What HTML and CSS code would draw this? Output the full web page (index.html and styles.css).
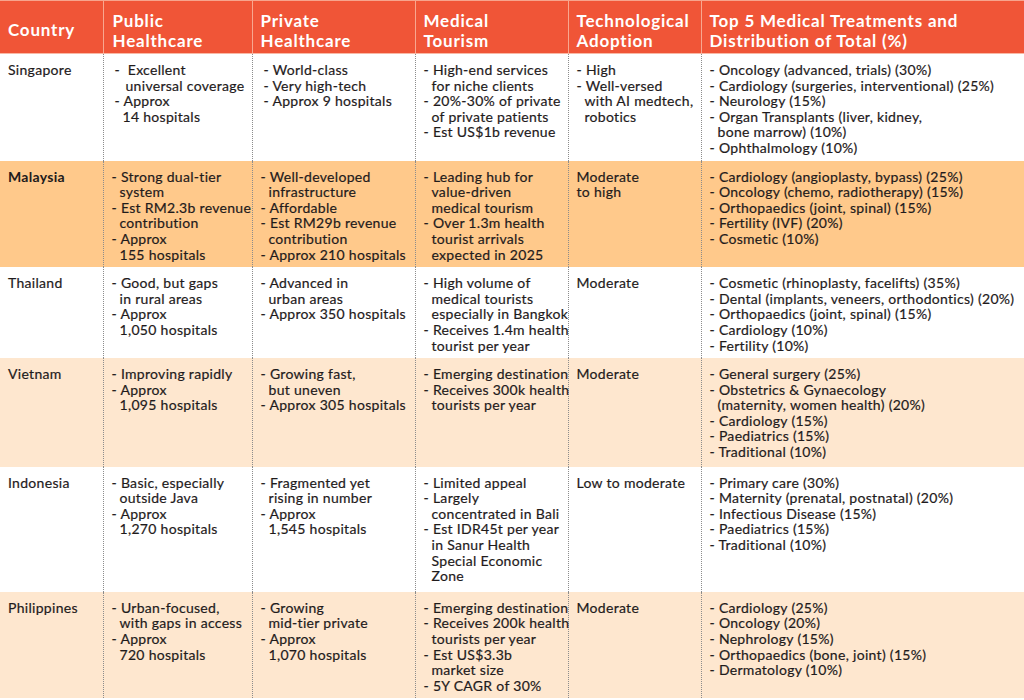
FILE: index.html
```html
<!DOCTYPE html>
<html>
<head>
<meta charset="utf-8">
<link rel="stylesheet" href="styles.css">
</head>
<body>
<table class="grid">
  <colgroup>
    <col class="c1"><col class="c2"><col class="c3"><col class="c4"><col class="c5"><col class="c6">
  </colgroup>
  <thead>
    <tr>
      <th class="h-country">Country</th>
      <th class="h-pad1">Public<br>Healthcare</th>
      <th>Private<br>Healthcare</th>
      <th>Medical<br>Tourism</th>
      <th>Technological<br>Adoption</th>
      <th>Top 5 Medical Treatments and<br>Distribution of Total (%)</th>
    </tr>
  </thead>
  <tbody>
    <tr>
      <td>Singapore</td>
      <td class="wide"><div class="item lead">-&nbsp; Excellent<br>universal coverage</div><div class="item">- Approx<br>14 hospitals</div></td>
      <td class="wide"><div class="item">- World-class</div><div class="item">- Very high-tech</div><div class="item">- Approx 9 hospitals</div></td>
      <td><div class="item">- High-end services<br>for niche clients</div><div class="item">- 20%-30% of private<br>of private patients</div><div class="item">- Est US$1b revenue</div></td>
      <td><div class="item">- High</div><div class="item">- Well-versed<br>with AI medtech,<br>robotics</div></td>
      <td><div class="item">- Oncology (advanced, trials) (30%)</div><div class="item">- Cardiology (surgeries, interventional) (25%)</div><div class="item">- Neurology (15%)</div><div class="item">- Organ Transplants (liver, kidney,<br>bone marrow) (10%)</div><div class="item">- Ophthalmology (10%)</div></td>
    </tr>
    <tr class="hl">
      <td class="strong">Malaysia</td>
      <td><div class="item">- Strong dual-tier<br>system</div><div class="item">- Est RM2.3b revenue<br>contribution</div><div class="item">- Approx<br>155 hospitals</div></td>
      <td><div class="item">- Well-developed<br>infrastructure</div><div class="item">- Affordable</div><div class="item">- Est RM29b revenue<br>contribution</div><div class="item">- Approx 210 hospitals</div></td>
      <td><div class="item">- Leading hub for<br>value-driven<br>medical tourism</div><div class="item">- Over 1.3m health<br>tourist arrivals<br>expected in 2025</div></td>
      <td>Moderate<br>to high</td>
      <td><div class="item">- Cardiology (angioplasty, bypass) (25%)</div><div class="item">- Oncology (chemo, radiotherapy) (15%)</div><div class="item">- Orthopaedics (joint, spinal) (15%)</div><div class="item">- Fertility (IVF) (20%)</div><div class="item">- Cosmetic (10%)</div></td>
    </tr>
    <tr>
      <td>Thailand</td>
      <td><div class="item">- Good, but gaps<br>in rural areas</div><div class="item">- Approx<br>1,050 hospitals</div></td>
      <td><div class="item">- Advanced in<br>urban areas</div><div class="item">- Approx 350 hospitals</div></td>
      <td><div class="item">- High volume of<br>medical tourists<br>especially in Bangkok</div><div class="item">- Receives 1.4m health<br>tourist per year</div></td>
      <td>Moderate</td>
      <td><div class="item">- Cosmetic (rhinoplasty, facelifts) (35%)</div><div class="item">- Dental (implants, veneers, orthodontics) (20%)</div><div class="item">- Orthopaedics (joint, spinal) (15%)</div><div class="item">- Cardiology (10%)</div><div class="item">- Fertility (10%)</div></td>
    </tr>
    <tr class="soft roomy">
      <td>Vietnam</td>
      <td><div class="item">- Improving rapidly</div><div class="item">- Approx<br>1,095 hospitals</div></td>
      <td><div class="item">- Growing fast,<br>but uneven</div><div class="item">- Approx 305 hospitals</div></td>
      <td><div class="item">- Emerging destination</div><div class="item">- Receives 300k health<br>tourists per year</div></td>
      <td>Moderate</td>
      <td><div class="item">- General surgery (25%)</div><div class="item">- Obstetrics &amp; Gynaecology<br>(maternity, women health) (20%)</div><div class="item">- Cardiology (15%)</div><div class="item">- Paediatrics (15%)</div><div class="item">- Traditional (10%)</div></td>
    </tr>
    <tr class="tall">
      <td>Indonesia</td>
      <td><div class="item">- Basic, especially<br>outside Java</div><div class="item">- Approx<br>1,270 hospitals</div></td>
      <td><div class="item">- Fragmented yet<br>rising in number</div><div class="item">- Approx<br>1,545 hospitals</div></td>
      <td><div class="item">- Limited appeal</div><div class="item">- Largely<br>concentrated in Bali</div><div class="item">- Est IDR45t per year<br>in Sanur Health<br>Special Economic<br>Zone</div></td>
      <td>Low to moderate</td>
      <td><div class="item">- Primary care (30%)</div><div class="item">- Maternity (prenatal, postnatal) (20%)</div><div class="item">- Infectious Disease (15%)</div><div class="item">- Paediatrics (15%)</div><div class="item">- Traditional (10%)</div></td>
    </tr>
    <tr class="soft">
      <td>Philippines</td>
      <td><div class="item">- Urban-focused,<br>with gaps in access</div><div class="item">- Approx<br>720 hospitals</div></td>
      <td><div class="item">- Growing<br>mid-tier private</div><div class="item">- Approx<br>1,070 hospitals</div></td>
      <td><div class="item">- Emerging destination</div><div class="item">- Receives 200k health<br>tourists per year</div><div class="item">- Est US$3.3b<br>market size</div><div class="item">- 5Y CAGR of 30%</div></td>
      <td>Moderate</td>
      <td><div class="item">- Cardiology (25%)</div><div class="item">- Oncology (20%)</div><div class="item">- Nephrology (15%)</div><div class="item">- Orthopaedics (bone, joint) (15%)</div><div class="item">- Dermatology (10%)</div></td>
    </tr>
  </tbody>
</table>
</body>
</html>
```

FILE: styles.css
```css
html, body {
  margin: 0;
  padding: 0;
  background: #ffffff;
}

body {
  font-family: Lato, "Liberation Sans", sans-serif;
  color: #1f1b1c;
  width: 1024px;
  height: 700px;
  overflow: hidden;
}

.grid {
  width: 1024px;
  table-layout: fixed;
  border-collapse: collapse;
  border-spacing: 0;
}

.c1 { width: 103px; }
.c2 { width: 149px; }
.c3 { width: 163px; }
.c4 { width: 153px; }
.c5 { width: 133px; }
.c6 { width: 323px; }

th {
  background: #f05537;
  color: #ffffff;
  font-weight: 700;
  font-size: 17px;
  letter-spacing: 0.8px;
  line-height: 20.4px;
  text-align: left;
  vertical-align: top;
  padding: 9.5px 4px 1.7px 8px;
  border-top: 1px solid #f7a48d;
  border-bottom: 1px solid #f9b9a6;
  border-left: 1px solid #f8a78f;
  white-space: nowrap;
}

th:first-child {
  border-left: none;
}

.h-country {
  padding-top: 18.5px;
  padding-bottom: 0;
}

.h-pad1 {
  padding-left: 9px;
}

td {
  font-size: 14px;
  letter-spacing: 0.3px;
  line-height: 15.6px;
  vertical-align: top;
  padding: 8px 4px 5px 8px;
  border-left: 1px dotted #8c8c8c;
  white-space: nowrap;
  -webkit-text-stroke: 0.2px currentColor;
}

td:first-child {
  border-left: none;
}

td.wide {
  padding-left: 11px;
}

td.strong {
  font-weight: 700;
  -webkit-text-stroke: 0;
}

.item {
  padding-left: 8px;
  text-indent: -8px;
}

.item.lead {
  padding-left: 11px;
  text-indent: -11px;
}

tr.roomy td {
  padding-bottom: 7px;
}

tr.tall td {
  padding-bottom: 8px;
}

tr.hl td {
  background: #ffc98b;
}

tr.soft td {
  background: #fee7cf;
}
```
